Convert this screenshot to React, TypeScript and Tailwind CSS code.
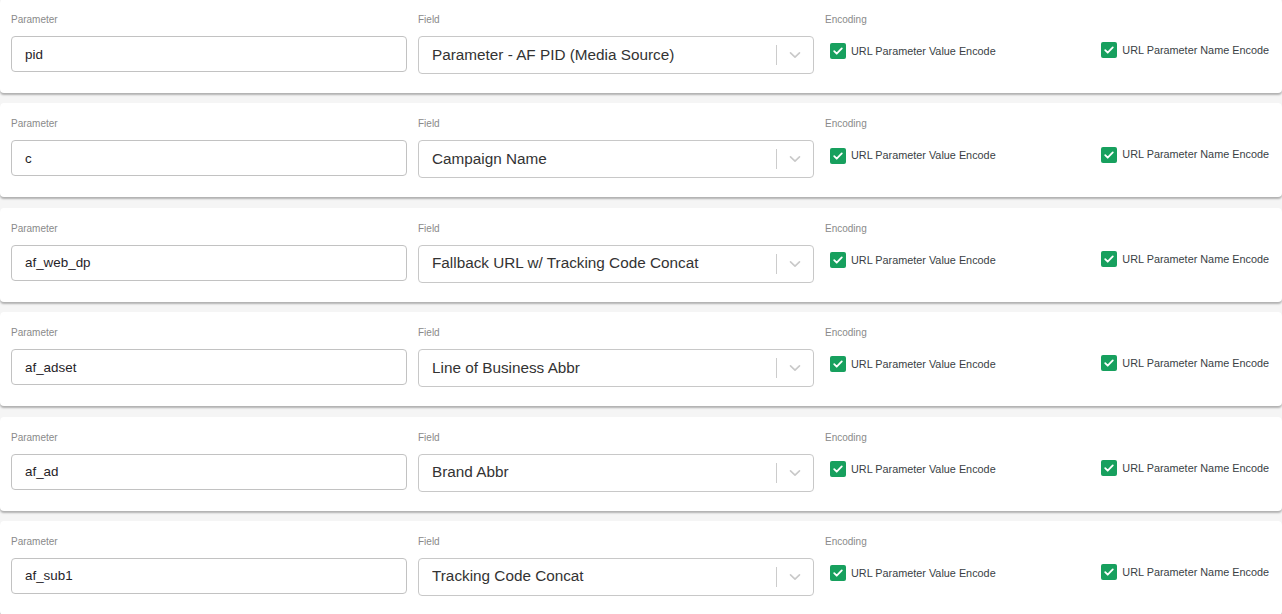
import { useState } from 'react'

type Row = { param: string; field: string }

const rows: Row[] = [
  { param: 'pid', field: 'Parameter - AF PID (Media Source)' },
  { param: 'c', field: 'Campaign Name' },
  { param: 'af_web_dp', field: 'Fallback URL w/ Tracking Code Concat' },
  { param: 'af_adset', field: 'Line of Business Abbr' },
  { param: 'af_ad', field: 'Brand Abbr' },
  { param: 'af_sub1', field: 'Tracking Code Concat' },
]

function Label({ children }: { children: React.ReactNode }) {
  return <div className="h-3 text-[10px] leading-3 text-[#8a8a8a]">{children}</div>
}

function Check({ label, checked, onToggle, className = '' }: { label: string; checked: boolean; onToggle: () => void; className?: string }) {
  return (
    <button type="button" onClick={onToggle} className={`flex items-center gap-[5px] ${className}`}>
      <span
        className={`flex h-4 w-4 items-center justify-center rounded-[2px] ${
          checked ? 'bg-[#17a05e]' : 'border border-[#999] bg-white'
        }`}
      >
        {checked && (
          <svg width="12" height="12" viewBox="0 0 12 12" fill="none">
            <path d="M2.2 6.2l2.5 2.5 5.1-5.3" stroke="white" strokeWidth="1.8" strokeLinecap="round" strokeLinejoin="round" />
          </svg>
        )}
      </span>
      <span className="text-[10.85px] text-[#3a3f45]">{label}</span>
    </button>
  )
}

function ParamCard({ row }: { row: Row }) {
  const [value, setValue] = useState(row.param)
  const [valEnc, setValEnc] = useState(true)
  const [nameEnc, setNameEnc] = useState(true)

  return (
    <div className="h-[94px] rounded-[4px] bg-white px-[11px] pt-[15px] shadow-[0_2px_2px_rgba(0,0,0,0.28)]">
      <div className="grid grid-cols-[396px_396px_1fr] gap-x-[11px]">
        <div>
          <Label>Parameter</Label>
          <input
            value={value}
            onChange={(e) => setValue(e.target.value)}
            className="mt-[10px] h-9 w-full rounded-[4px] border border-[#c2c2c2] bg-white pl-[13px] text-[13.4px] text-[#1f2328] outline-none"
          />
        </div>
        <div>
          <Label>Field</Label>
          <div className="mt-[10px] flex h-[38px] items-center rounded-[4px] border border-[#c8c8c8] bg-white pl-[13px]">
            <span className="flex-1 truncate text-[15.3px] text-[#333]">{row.field}</span>
            <span className="h-5 w-px bg-[#cccccc]" />
            <span className="flex w-[36px] items-center justify-center">
              <svg width="12" height="8" viewBox="0 0 12 8" fill="none">
                <path d="M1.5 1.8l4.5 4.3 4.5-4.3" stroke="#c9c9c9" strokeWidth="1.6" strokeLinecap="round" strokeLinejoin="round" />
              </svg>
            </span>
          </div>
        </div>
        <div>
          <Label>Encoding</Label>
          <div className="mt-[16px] flex items-start justify-between pl-[5px] pr-[2px]">
            <Check label="URL Parameter Value Encode" checked={valEnc} onToggle={() => setValEnc(!valEnc)} className="mt-px" />
            <Check label="URL Parameter Name Encode" checked={nameEnc} onToggle={() => setNameEnc(!nameEnc)} />
          </div>
        </div>
      </div>
    </div>
  )
}

export default function App() {
  return (
    <div className="h-[614px] overflow-hidden bg-[#f5f5f5] font-['Liberation_Sans',Arial,sans-serif]">
      <div className="-mt-[1px] flex flex-col gap-[10.4px]">
        {rows.map((r) => (
          <ParamCard key={r.param} row={r} />
        ))}
      </div>
    </div>
  )
}
